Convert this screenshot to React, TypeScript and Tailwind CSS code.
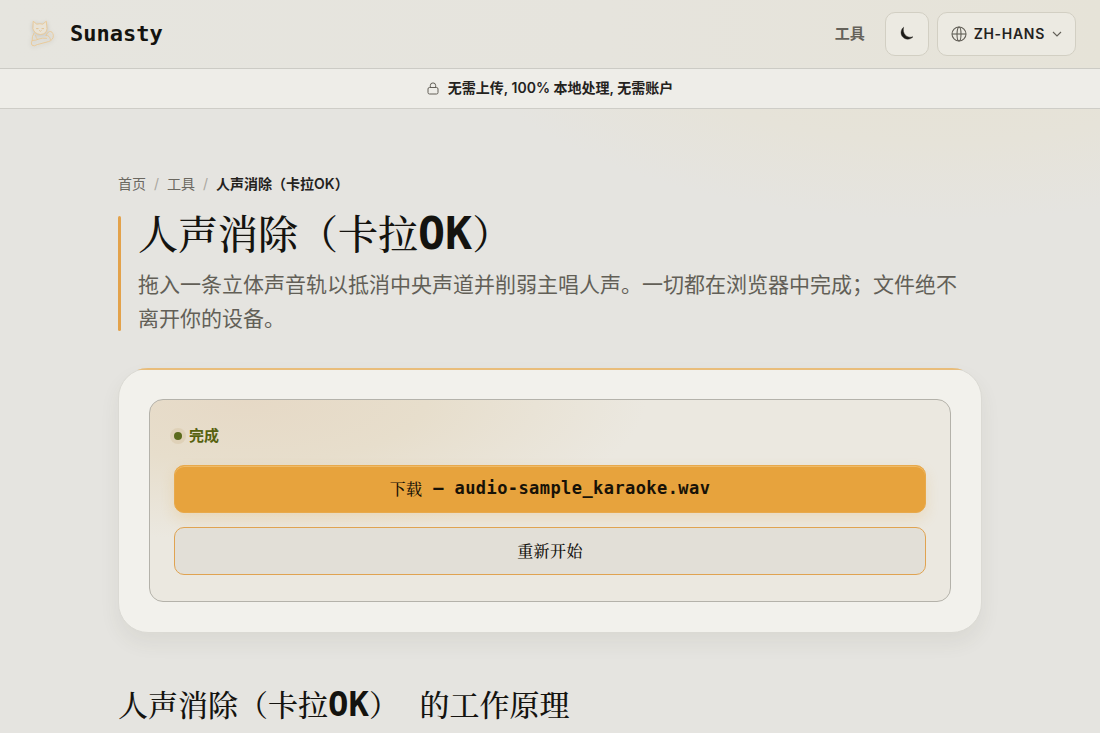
import React from 'react'

const sans = "font-['Inter','Noto_Sans_CJK_SC',sans-serif]"
const mono = "font-['DejaVu_Sans_Mono','Noto_Serif_CJK_SC','Noto_Sans_CJK_SC',monospace]"
const song = "font-['Noto_Serif_CJK_SC','Noto_Sans_CJK_SC',serif] font-medium"

function CatLogo() {
  return (
    <svg viewBox="0 0 28 28" className="size-7 drop-shadow-sm" fill="none" stroke="#e9c793" strokeWidth=".9" strokeLinecap="round" strokeLinejoin="round" aria-hidden="true">
      <path d="M5.5 1.5 8.8 4.2Q12 3.2 14.8 4.2L18.3 1.2 19 8.500Q18.8 14 12.5 14.5 6.5 14 5 9Z" fill="#e9e3d6" />
      <path d="M8.5 8.6h1.6M14 8.6h1.6M11.6 10.600l.8.8.8-.8" stroke="#e3c08b" />
      <path d="M6 13Q3.6 17 4.2 20.5 2.4 23 4 25.2 6 26.8 9.2 24.6L20.5 21.600Q25.6 20 25.3 15.200 24.6 11 21.4 11.600 19 12.200 18 15.500" />
      <path d="M4.2 20.5Q8 20.500 11 19 14 17.600 18.5 18.300M18 15.500Q21.800 15 22.400 19.500M7.500 15.500Q8 18 9.500 19.400" />
    </svg>
  )
}

function MoonIcon() {
  return (
    <svg viewBox="0 0 16 16" className="size-4" aria-hidden="true">
      <path d="M4.6 1.2C1.8 3.4 1.2 7.6 3.400 10.600 5.8 13.800 11 14.200 14 10.800 11.400 11.700 8.400 11.200 6.400 9.200 4.400 7.100 3.900 4 4.600 1.200Z" fill="#1b1a16" stroke="#1b1a16" strokeWidth=".4" strokeLinejoin="round" />
    </svg>
  )
}

function GlobeIcon() {
  return (
    <svg viewBox="0 0 16 16" className="size-4" fill="none" stroke="#625f57" strokeWidth="1.1" aria-hidden="true">
      <circle cx="8" cy="8" r="7" />
      <ellipse cx="8" cy="8" rx="2" ry="7" />
      <path d="M1 8h14" />
    </svg>
  )
}

function ChevronIcon() {
  return (
    <svg viewBox="0 0 10 10" className="size-[10px]" fill="none" stroke="#625f57" strokeWidth="1.1" aria-hidden="true">
      <path d="m1 3 4 4 4-4" />
    </svg>
  )
}

function LockIcon() {
  return (
    <svg viewBox="0 0 12 13" className="h-[13px] w-3" fill="none" stroke="#625f57" strokeWidth="1" aria-hidden="true">
      <rect x="1" y="5.5" width="10" height="6.5" rx="1.5" />
      <path d="M3.3 5.5V3.6a2.7 2.7 0 0 1 5.4 0v1.9" />
    </svg>
  )
}

function Header() {
  return (
    <header className="flex h-[69px] items-center justify-between border-b border-[#cccbc5] bg-[linear-gradient(90deg,#e6e5df_0%,#e6e4dd_55%,#e6e3d8_100%)] pr-6 pl-7">
      <a href="/" className="flex items-center gap-[14px]">
        <CatLogo />
        <span className={`${mono} text-[22px] leading-7 font-bold text-[#14130f]`}>Sunasty</span>
      </a>
      <nav className="flex items-center gap-2">
        <a href="/tools" className="mr-3 text-[15px] font-bold text-[#65625a]">工具</a>
        <button type="button" aria-label="切换主题" className="flex size-11 items-center justify-center rounded-[10px] border border-[#d2cfc3] bg-[#eceae2]">
          <MoonIcon />
        </button>
        <button type="button" aria-haspopup="listbox" className="flex h-11 items-center gap-[7px] rounded-[10px] border border-[#d2cfc3] bg-[#eceae2] px-[13px] text-[#24221d]">
          <GlobeIcon />
          <span className="text-sm font-semibold tracking-wider">ZH-HANS</span>
          <ChevronIcon />
        </button>
      </nav>
    </header>
  )
}

function Breadcrumb() {
  return (
    <nav aria-label="面包屑" className="text-sm leading-5 text-[#6b6860]">
      <ol className="flex items-center gap-2">
        <li><a href="/">首页</a></li>
        <li aria-hidden="true" className="text-[#aaa79f]">/</li>
        <li><a href="/tools">工具</a></li>
        <li aria-hidden="true" className="text-[#aaa79f]">/</li>
        <li aria-current="page" className="font-semibold text-[#24221d]">人声消除（卡拉OK）</li>
      </ol>
    </nav>
  )
}

export default function App() {
  return (
    <div className={`${sans} min-h-screen bg-[#e5e4e0] bg-[radial-gradient(ellipse_500px_220px_at_940px_0px,#e6e1d2_0%,#e6e3d9_65%,#e5e4e0_100%)] text-[#14130f]`}>
      <Header />
      <div className="flex h-10 items-center justify-center gap-[9px] border-b border-[#cecdc7] bg-[#eeede8] pb-px text-sm font-semibold text-[#24221d]">
        <LockIcon />
        <p>无需上传, 100% 本地处理, 无需账户</p>
      </div>

      <main className="mx-auto max-w-[912px] px-6 pt-[65px] pb-4">
        <Breadcrumb />

        <section className="mt-[22px] flex gap-[17px]">
          <div className="mb-[5px] w-[3px] shrink-0 rounded-full bg-[#e3a24b]" />
          <div className="pr-5">
            <h1 className={`${song} h-9 text-[40px] leading-8`}>
              人声消除（卡拉<span className={`${mono} text-[45px] font-bold`}>OK</span>）
            </h1>
            <p className="mt-4 text-[21px] leading-[34px] text-[#625f57]">
              拖入一条立体声音轨以抵消中央声道并削弱主唱人声。一切都在浏览器中完成；文件绝不离开你的设备。
            </p>
          </div>
        </section>

        <section className="relative mt-8 rounded-[30px] border border-[#dbdad4] bg-[#f2f1ec] p-[30px] shadow-[0_10px_20px_rgba(70,68,45,0.07)]">
          <div aria-hidden="true" className="pointer-events-none absolute -inset-px overflow-hidden rounded-[30px]">
            <div className="h-[2px] bg-[#e9bd7b]" />
          </div>
          <div className="rounded-[14px] border border-[#b4b2aa] bg-[#ebe8e0] bg-[radial-gradient(ellipse_50%_70%_at_12%_0%,#e6d9c6_0%,#e7decc_45%,#ebe8e0_100%)] px-6 pt-6 pb-[26px]">
            <p role="status" className="flex h-6 items-center gap-[7px] text-[15px] font-bold text-[#56610f]">
              <span className="size-2 rounded-full bg-[#5b6a1c] ring-4 ring-[#dfd1b8]" />
              完成
            </p>
            <button type="button" className={`${mono} mt-[17px] flex h-12 w-full items-center justify-center rounded-[10px] border border-[#e8a94b] bg-[#e7a33d] text-[17px] font-bold tracking-wide text-[#171207] shadow-[inset_0_1px_0_#efbb69,0_6px_14px_rgba(231,163,61,0.20)]`}>
              <span className={`${song} text-base`}>下载</span>
              <span className="whitespace-pre"> – audio-sample_karaoke.wav</span>
            </button>
            <button type="button" className={`${song} mt-[14px] h-12 w-full rounded-[10px] border border-[#e0a351] bg-[#e2dfd7] text-base tracking-wide`}>
              重新开始
            </button>
          </div>
        </section>

        <h2 className={`${song} mt-[54px] h-9 text-[30px] leading-8`}>
          人声消除（卡拉<span className={`${mono} text-[34px] font-bold`}>OK</span>）<span className={`${mono} text-[34px] font-bold`}> </span>的工作原理
        </h2>
      </main>
    </div>
  )
}
